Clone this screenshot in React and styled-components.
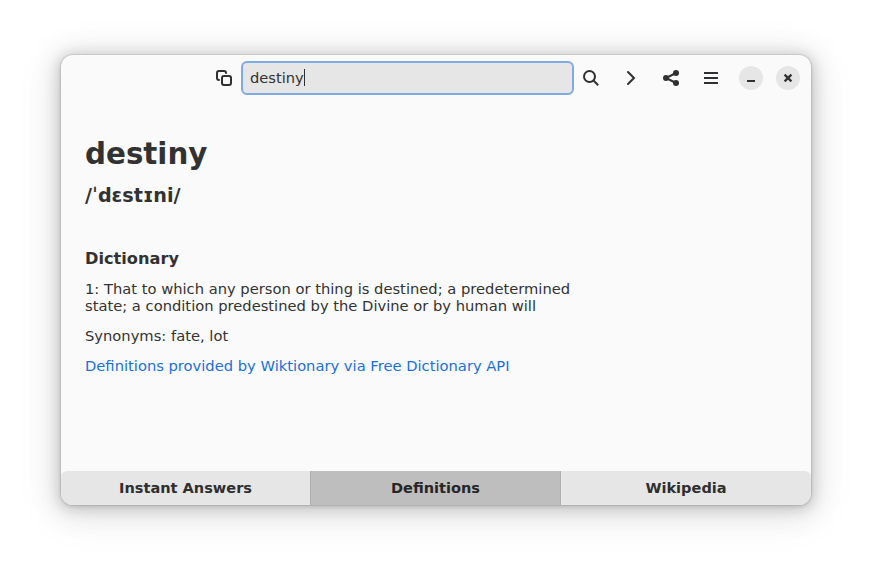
import React from "react";
import styled, { createGlobalStyle } from "styled-components";

const GlobalStyle = createGlobalStyle`
  *, *::before, *::after { box-sizing: border-box; }
  body {
    margin: 0;
    background: #fff;
    color: #323232;
    font-family: "DejaVu Sans", sans-serif;
    font-size: 14.667px;
    line-height: 17px;
  }
`;

const Desktop = styled.div`
  width: 872px;
  height: 572px;
  padding: 55px 61px 67px;
  overflow: hidden;
`;

const Window = styled.main`
  display: flex;
  flex-direction: column;
  width: 750px;
  height: 450px;
  border-radius: 12px;
  background: #fafafa;
  box-shadow:
    0 0 0 1px rgba(0, 0, 0, 0.05),
    0 1px 3px 1px rgba(0, 0, 0, 0.09),
    0 2px 14px 3px rgba(0, 0, 0, 0.15),
    0 4px 28px 9px rgba(0, 0, 0, 0.07),
    0 6px 48px 8px rgba(0, 0, 0, 0.05);
`;

const HeaderBar = styled.header`
  display: flex;
  align-items: center;
  height: 46px;
  padding-left: 146px;
`;

const IconButton = styled.button`
  display: grid;
  place-items: center;
  width: 34px;
  height: 34px;
  margin: 0 ${(p) => p.$after ?? 6}px 0 0;
  padding: 0;
  border: 0;
  background: none;
  color: #2e3032;
`;

const WindowButton = styled(IconButton)`
  width: 24px;
  height: 24px;
  border-radius: 50%;
  background: #e6e6e6;
`;

const Icon = styled.svg.attrs({ width: 16, height: 16, viewBox: "0 0 16 16" })`
  display: block;
  fill: none;
  stroke: currentColor;
  stroke-width: 2;
`;

const SearchEntry = styled.div`
  display: flex;
  align-items: center;
  width: 333px;
  height: 34px;
  padding: 0 7px 1px;
  border: 2px solid #7fabe1;
  border-radius: 6px;
  background: #e6e6e6;
`;

const Caret = styled.span`
  width: 1px;
  height: 17px;
  background: #2e3032;
`;

const Article = styled.article`
  flex: 1;
  padding: 36px 24px 0;
`;

const Word = styled.h1`
  margin: 0;
  font-size: 29.333px;
  line-height: 35px;
`;

const Phonetic = styled.h2`
  margin: 12px 0 0;
  font-size: 19.2px;
  line-height: 23px;
`;

const SourceTitle = styled.h3`
  margin: 42px 0 12px;
  font-size: 16.2px;
  line-height: 19px;
`;

const Paragraph = styled.p`
  width: 500px;
  margin: 0 0 13px;
  font-size: 14.71px;
`;

const Link = styled.a`
  color: #1b6fdb;
`;

const Tabs = styled.nav`
  display: grid;
  grid-template-columns: 249px 250px 251px;
  height: 34px;
  border-radius: 6px 6px 12px 12px;
  overflow: hidden;
`;

const Tab = styled.button`
  padding: 0 0 1px;
  border: 0;
  border-left: ${(p) => (p.$first ? "0" : "1px solid #b0b0b0")};
  background: ${(p) => (p.$active ? "#bebebe" : "#e6e6e6")};
  color: ${(p) => (p.$active ? "#262626" : "#2f2f2f")};
  font: bold 14.55px/17px "DejaVu Sans", sans-serif;
`;

export default function App() {
  return (
    <>
      <GlobalStyle />
      <Desktop>
        <Window>
          <HeaderBar>
            <IconButton aria-label="Copy" $after={0}>
              <Icon>
                <path
                  d="M3 10a2 2 0 0 1-2-2V3a2 2 0 0 1 2-2h5a2 2 0 0 1 2 2"
                  strokeLinecap="round"
                />
                <rect x="6" y="6" width="9" height="9" rx="2" />
              </Icon>
            </IconButton>
            <SearchEntry>
              destiny
              <Caret />
            </SearchEntry>
            <IconButton aria-label="Search">
              <Icon>
                <circle cx="6.5" cy="6.5" r="5.5" />
                <path d="M10.5 10.5 15.2 15.2" />
              </Icon>
            </IconButton>
            <IconButton aria-label="Next">
              <Icon>
                <path d="M5 2 11 8 5 14" strokeLinecap="round" />
              </Icon>
            </IconButton>
            <IconButton aria-label="Share">
              <Icon>
                <path d="M13 3 3 8 13 13" />
                <g fill="currentColor" stroke="none">
                  <circle cx="13" cy="3" r="3" />
                  <circle cx="3" cy="8" r="3" />
                  <circle cx="13" cy="13" r="3" />
                </g>
              </Icon>
            </IconButton>
            <IconButton aria-label="Menu" $after={11}>
              <Icon>
                <path d="M1 3H15M1 8H15M1 13H15" />
              </Icon>
            </IconButton>
            <WindowButton aria-label="Minimize" $after={13}>
              <Icon>
                <path d="M4 11H12" />
              </Icon>
            </WindowButton>
            <WindowButton aria-label="Close" $after={0}>
              <Icon>
                <path d="M4.6 4.6 11.4 11.4M11.4 4.6 4.6 11.4" strokeWidth="2.2" />
              </Icon>
            </WindowButton>
          </HeaderBar>
          <Article>
            <Word>destiny</Word>
            <Phonetic>/ˈdɛstɪni/</Phonetic>
            <SourceTitle>Dictionary</SourceTitle>
            <Paragraph>
              1: That to which any person or thing is destined; a predetermined
              state; a condition predestined by the Divine or by human will
            </Paragraph>
            <Paragraph>Synonyms: fate, lot</Paragraph>
            <Paragraph>
              <Link>Definitions provided by Wiktionary via Free Dictionary API</Link>
            </Paragraph>
          </Article>
          <Tabs>
            <Tab $first>Instant Answers</Tab>
            <Tab $active>Definitions</Tab>
            <Tab>Wikipedia</Tab>
          </Tabs>
        </Window>
      </Desktop>
    </>
  );
}
